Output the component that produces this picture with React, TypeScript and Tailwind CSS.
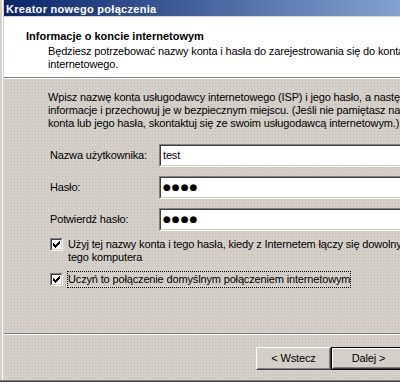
import type { ReactNode } from 'react';

const dotted =
  'bg-[#d4d0c8] bg-[radial-gradient(#c3bfb7_0.7px,transparent_0.8px)] bg-[length:3px_3px]';

function Field({ children }: { children: ReactNode }) {
  return (
    <div className="h-[23px] flex-1 border border-t-[#808080] border-l-[#808080] border-b-white border-r-white">
      <div className="h-full border border-t-[#404040] border-l-[#404040] border-b-[#d4d0c8] border-r-[#d4d0c8] bg-white pl-[2px] flex items-center">
        {children}
      </div>
    </div>
  );
}

function Password() {
  return (
    <span className="font-['DejaVu_Sans',sans-serif] text-[9px] tracking-[1px] leading-[13px]">
      ●●●●
    </span>
  );
}

function Checkbox() {
  return (
    <span className="block w-[13px] h-[13px] shrink-0 border border-t-[#808080] border-l-[#808080] border-b-white border-r-white">
      <span className="block w-full h-full border border-t-[#404040] border-l-[#404040] border-b-[#d4d0c8] border-r-[#d4d0c8] bg-white pl-px pt-px">
        <svg width="7" height="7" viewBox="0 0 7 7" shapeRendering="crispEdges" className="block">
          <rect x="6" y="0" width="1" height="1" />
          <rect x="5" y="1" width="2" height="1" />
          <rect x="0" y="2" width="1" height="1" />
          <rect x="4" y="2" width="3" height="1" />
          <rect x="0" y="3" width="2" height="1" />
          <rect x="3" y="3" width="3" height="1" />
          <rect x="0" y="4" width="5" height="1" />
          <rect x="1" y="5" width="3" height="1" />
          <rect x="2" y="6" width="1" height="1" />
        </svg>
      </span>
    </span>
  );
}

export default function App() {
  return (
    <div className="w-[400px] h-[388px] overflow-hidden bg-white font-['Liberation_Sans',Arial,sans-serif] text-[11px] leading-[13px] tracking-[-0.15px] text-black">
      <div className="w-[520px] h-[382px] border-b border-[#404040]">
        <div className="h-full border-b border-[#808080] bg-[#d4d0c8] pl-[2px]">
          <div className="h-full border-l border-white">
            <div className="h-full border-l border-[#d4d0c8] flex flex-col">
              {/* title bar */}
              <div className="h-[16px] pt-[3px] pl-[2px] bg-[linear-gradient(to_right,#0a246a,#a6caf0)] text-white font-bold tracking-[0.3px] whitespace-nowrap">
                Kreator nowego połączenia
              </div>
              <div className="h-px bg-[#d4d0c8]" />

              {/* header */}
              <div className="h-[60px] bg-white pl-[22px] pt-[13px] whitespace-nowrap">
                <div className="font-bold tracking-normal">Informacje o koncie internetowym</div>
                <div className="pl-[22px] mt-[2px]">
                  <div>Będziesz potrzebować nazwy konta i hasła do zarejestrowania się do konta</div>
                  <div>internetowego.</div>
                </div>
              </div>
              <div className="h-px bg-[#808080]" />
              <div className="h-px bg-white" />

              {/* body */}
              <div className={`h-[254px] pt-[12px] pl-[44px] whitespace-nowrap ${dotted}`}>
                <div>
                  <div>Wpisz nazwę konta usługodawcy internetowego (ISP) i jego hasło, a następnie zapisz te</div>
                  <div>informacje i przechowuj je w bezpiecznym miejscu. (Jeśli nie pamiętasz nazwy istniejącego</div>
                  <div>konta lub jego hasła, skontaktuj się ze swoim usługodawcą internetowym.)</div>
                </div>

                <div className="pl-[2px] mt-[14px] flex flex-col gap-[9px]">
                  <div className="flex items-center">
                    <span className="w-[109px]">Nazwa użytkownika:</span>
                    <Field>test</Field>
                  </div>
                  <div className="flex items-center">
                    <span className="w-[109px]">Hasło:</span>
                    <Field>
                      <Password />
                    </Field>
                  </div>
                  <div className="flex items-center">
                    <span className="w-[109px]">Potwierdź hasło:</span>
                    <Field>
                      <Password />
                    </Field>
                  </div>
                </div>

                <div className="pl-[2px] mt-[7px] flex items-start gap-[5px]">
                  <Checkbox />
                  <div>
                    <div>Użyj tej nazwy konta i tego hasła, kiedy z Internetem łączy się dowolny użytkownik</div>
                    <div>tego komputera</div>
                  </div>
                </div>

                <div className="pl-[2px] mt-[7px] flex items-start gap-[4px]">
                  <span className="mt-[2px]">
                    <Checkbox />
                  </span>
                  <span className="border border-dotted border-black py-px">
                    Uczyń to połączenie domyślnym połączeniem internetowym
                  </span>
                </div>
              </div>

              <div className="h-px bg-[#808080]" />
              <div className="h-px bg-white" />

              {/* buttons */}
              <div className={`flex-1 pt-[12px] pl-[252px] flex items-start ${dotted}`}>
                <button className="w-[75px] h-[23px] border border-t-white border-l-white border-b-[#404040] border-r-[#404040]">
                  <span className="h-full flex items-center justify-center border border-t-[#d4d0c8] border-l-[#d4d0c8] border-b-[#808080] border-r-[#808080] bg-[#d4d0c8]">
                    &lt; Wstecz
                  </span>
                </button>
                <button className="w-[75px] h-[23px] border border-black">
                  <span className="h-full flex items-center justify-center border border-t-white border-l-white border-b-[#404040] border-r-[#404040]">
                    <span className="h-full w-full flex items-center justify-center border border-t-[#d4d0c8] border-l-[#d4d0c8] border-b-[#808080] border-r-[#808080] bg-[#d4d0c8]">
                      Dalej &gt;
                    </span>
                  </span>
                </button>
              </div>
            </div>
          </div>
        </div>
      </div>
    </div>
  );
}
